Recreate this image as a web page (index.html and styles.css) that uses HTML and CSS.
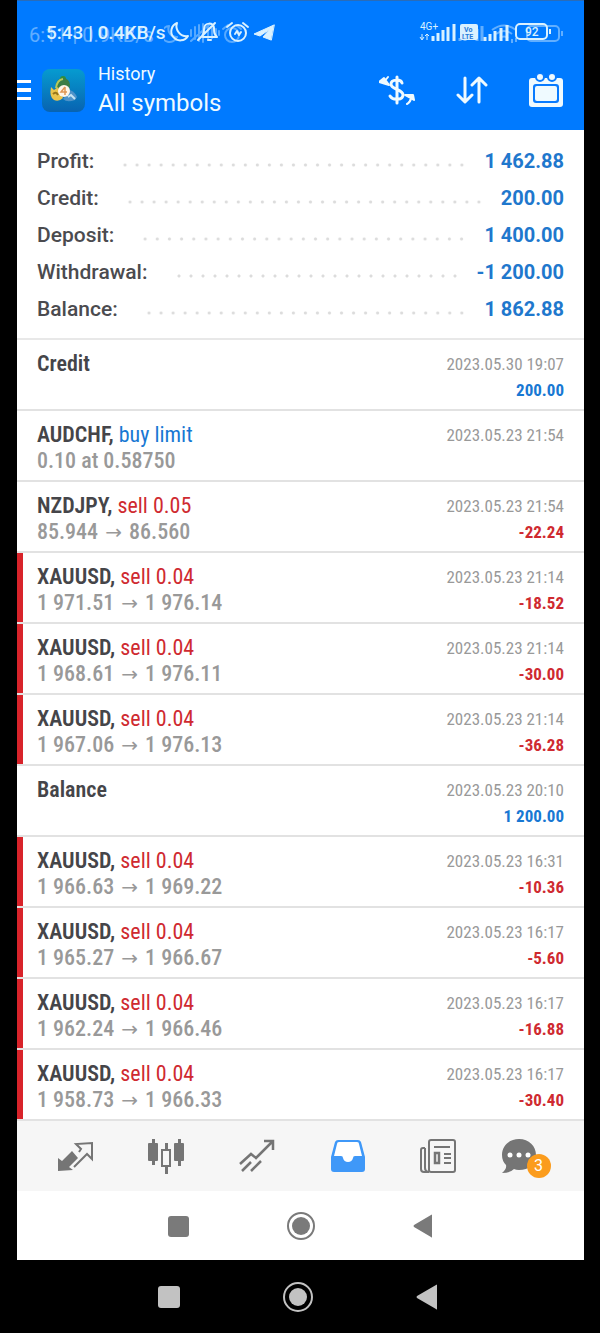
FILE: index.html
```html
<!DOCTYPE html>
<html lang="en">
<head>
<meta charset="utf-8">
<meta name="viewport" content="width=device-width, initial-scale=1">
<title>History</title>
<link rel="stylesheet" href="styles.css">
</head>
<body>
<div class="app">
  <header class="header">
    <div class="status">
      <div class="status-ghost">6:11 | 0.9KB/s</div>
      <div class="status-text">5:43 | 0.4KB/s</div>
      <svg class="status-icons" width="112" height="28" viewBox="164 19 112 28" fill="none" stroke="#d9f1ff" stroke-width="2" stroke-linecap="round" stroke-linejoin="round" aria-hidden="true">
        <g opacity=".4">
          <path d="M169 26a8 8 0 1 0 8 11a8 8 0 0 1-8-11z"/>
          <path d="M191 30v6M195 27v12M199 25v16M203 24v18M208 26v14M212 28v10M216 29v8M219 31v4M191 41L210 24"/>
          <circle cx="232" cy="35" r="7"/><path d="M223 29l5-4M236 25l5 4"/>
        </g>
        <path d="M177 23a9 9 0 1 0 11 13a10 10 0 0 1-11-13z"/>
        <path d="M202 36c2-2 2-4 2-7c0-7 10-7 10-1c0 4 0 6 3 9h-14M208 40h3M198 40L215 23"/>
        <circle cx="238" cy="33" r="8"/><path d="M227 27l5-4M243 23l5 4M235 34l2-3l2 4l2-3"/>
        <path d="M274 25L254 34L260 36L270 29L263 37L271 40Z" fill="#d9f1ff" stroke-width="1"/>
      </svg>
      <svg class="status-signal" width="146" height="26" viewBox="418 20 146 26" fill="none" stroke="#d9f1ff" aria-hidden="true">
        <text class="signal-label" x="420" y="30">4G+</text>
        <path d="M422 34v5M420 37l2 3l2-3M427 40v-5M425 36l2-2l2 2" stroke-width="1"/>
        <path d="M433 41v-5M438 41v-8M443 41v-11M448 41v-14M454 41v-17" stroke-width="3"/>
        <rect x="460" y="24" width="18" height="16" rx="2" fill="#d9f1ff" stroke="none"/>
        <text class="volte" x="464" y="32">Vo</text><text class="volte" x="462" y="39">LTE</text>
        <g opacity=".45"><path d="M460 41v-3M465 41v-5M477 41v-12M482 41v-15" stroke-width="3"/>
        <path d="M492 30q12-9 24 0M496 34q8-6 16 0M500 38q4-3 8 0M512 43v-4M516 38v4" stroke-width="2"/>
        <rect x="527" y="26" width="32" height="15" rx="4" stroke-width="2"/><path d="M562 31v5" stroke-width="2"/></g>
        <path d="M485 41v-4M490 41v-7M495 41v-10M501 41v-13M507 41v-16" stroke-width="3"/>
        <rect x="516" y="24" width="31" height="15" rx="4" stroke-width="2"/><path d="M550 29v5" stroke-width="2"/>
        <text class="battery" x="525" y="36">92</text>
      </svg>
    </div>
    <div class="toolbar">
      <button class="icon-button" aria-label="Menu"><svg width="14" height="22" viewBox="0 0 14 22" fill="#fff"><path d="M0 1h14v3H0zM0 9h14v4H0zM0 18h14v3H0z"/></svg></button>
      <svg class="logo" width="43" height="43" viewBox="0 0 43 43" aria-hidden="true">
        <defs><linearGradient id="tile" x2="0" y2="1"><stop offset="0" stop-color="#069bd0"/><stop offset="1" stop-color="#0863b1"/></linearGradient></defs>
        <rect width="43" height="43" rx="8" fill="url(#tile)"/>
        <circle cx="21" cy="10" r="3" fill="#2f8e3d"/><circle cx="21" cy="16" r="7" fill="#3c7d45"/><path d="M14 19q1-8 7-9" stroke="#b5c95c" stroke-width="2" fill="none"/>
        <path d="M9 18l3 3l4-3l5 11q-4 4-9 2q-5-3-3-13z" fill="#e9c44d"/><path d="M11 25q3-3 5 1" stroke="#97761c" stroke-width="2" fill="none"/>
        <path d="M21 30l7-9q5 2 7 7l-2 3q-8 3-12-1z" fill="#4f93c9"/><path d="M26 28l3-2l4 4" stroke="#c4e4f4" stroke-width="2" fill="none"/>
        <circle cx="22" cy="22" r="6" fill="#fff5e7"/><path d="M23 18l-4 5h6M23 18v8" stroke="#df9654" stroke-width="1.500" fill="none"/>
      </svg>
      <div class="titles"><div class="subtitle">History</div><h1 class="title">All symbols</h1></div>
      <div class="actions">
        <button class="icon-button" aria-label="Currency"><svg width="36" height="32" viewBox="0 0 36 32" fill="none" stroke="#effaff" stroke-width="3" stroke-linecap="round"><path d="M18 3v26M23 9c-1-4-11-4-11 1c0 6 12 5 12 11c0 5-10 6-13 1"/><path d="M9 3L5 8M0 8l5-4l5 7z" fill="#effaff" stroke-width="2" stroke-linejoin="round"/><path d="M28 30q4-2 4-7M26 21l8 0l1 5z" fill="#effaff" stroke-width="2" stroke-linejoin="round"/></svg></button>
        <button class="icon-button" aria-label="Sort"><svg width="32" height="30" viewBox="0 0 32 30" fill="none" stroke="#effaff" stroke-width="3" stroke-linecap="round" stroke-linejoin="round"><path d="M9 3v23M2 20l7 7l7-7M23 27V4M16 10l7-7l7 7"/></svg></button>
        <button class="icon-button" aria-label="Choose period"><svg width="34" height="34" viewBox="0 0 34 34"><rect y="5" width="34" height="29" rx="3" fill="#effaff"/><rect x="4" y="11" width="26" height="19" rx="3" fill="#087bff"/><rect x="6" y="13" width="22" height="15" rx="2" fill="#effaff"/><g fill="#effaff" stroke="#087bff" stroke-width="2"><circle cx="11" cy="4" r="4"/><circle cx="23" cy="4" r="4"/></g></svg></button>
      </div>
    </div>
  </header>

  <main>
    <dl class="summary">
      <div class="sum-row"><dt>Profit:</dt><dd><span class="dots"></span>1 462.88</dd></div>
      <div class="sum-row"><dt>Credit:</dt><dd><span class="dots"></span>200.00</dd></div>
      <div class="sum-row"><dt>Deposit:</dt><dd><span class="dots"></span>1 400.00</dd></div>
      <div class="sum-row"><dt>Withdrawal:</dt><dd><span class="dots"></span>-1 200.00</dd></div>
      <div class="sum-row"><dt>Balance:</dt><dd><span class="dots"></span>1 862.88</dd></div>
    </dl>
    <ul class="deals">
      <li class="deal"><div class="info"><div><b>Credit</b></div></div><div class="meta"><time>2023.05.30 19:07</time><div class="amount blue">200.00</div></div></li>
      <li class="deal"><div class="info"><div><b>AUDCHF,</b> <span class="blue">buy limit</span></div><div class="price">0.10 at 0.58750</div></div><div class="meta"><time>2023.05.23 21:54</time></div></li>
      <li class="deal"><div class="info"><div><b>NZDJPY,</b> <span class="red">sell 0.05</span></div><div class="price">85.944 <span class="arrow">→</span> 86.560</div></div><div class="meta"><time>2023.05.23 21:54</time><div class="amount red">-22.24</div></div></li>
      <li class="deal marked"><div class="info"><div><b>XAUUSD,</b> <span class="red">sell 0.04</span></div><div class="price">1 971.51 <span class="arrow">→</span> 1 976.14</div></div><div class="meta"><time>2023.05.23 21:14</time><div class="amount red">-18.52</div></div></li>
      <li class="deal marked"><div class="info"><div><b>XAUUSD,</b> <span class="red">sell 0.04</span></div><div class="price">1 968.61 <span class="arrow">→</span> 1 976.11</div></div><div class="meta"><time>2023.05.23 21:14</time><div class="amount red">-30.00</div></div></li>
      <li class="deal marked"><div class="info"><div><b>XAUUSD,</b> <span class="red">sell 0.04</span></div><div class="price">1 967.06 <span class="arrow">→</span> 1 976.13</div></div><div class="meta"><time>2023.05.23 21:14</time><div class="amount red">-36.28</div></div></li>
      <li class="deal"><div class="info"><div><b>Balance</b></div></div><div class="meta"><time>2023.05.23 20:10</time><div class="amount blue">1 200.00</div></div></li>
      <li class="deal marked"><div class="info"><div><b>XAUUSD,</b> <span class="red">sell 0.04</span></div><div class="price">1 966.63 <span class="arrow">→</span> 1 969.22</div></div><div class="meta"><time>2023.05.23 16:31</time><div class="amount red">-10.36</div></div></li>
      <li class="deal marked"><div class="info"><div><b>XAUUSD,</b> <span class="red">sell 0.04</span></div><div class="price">1 965.27 <span class="arrow">→</span> 1 966.67</div></div><div class="meta"><time>2023.05.23 16:17</time><div class="amount red">-5.60</div></div></li>
      <li class="deal marked"><div class="info"><div><b>XAUUSD,</b> <span class="red">sell 0.04</span></div><div class="price">1 962.24 <span class="arrow">→</span> 1 966.46</div></div><div class="meta"><time>2023.05.23 16:17</time><div class="amount red">-16.88</div></div></li>
      <li class="deal marked"><div class="info"><div><b>XAUUSD,</b> <span class="red">sell 0.04</span></div><div class="price">1 958.73 <span class="arrow">→</span> 1 966.33</div></div><div class="meta"><time>2023.05.23 16:17</time><div class="amount red">-30.40</div></div></li>
    </ul>
  </main>

  <nav class="tabs">
    <button class="tab" aria-label="Quotes"><svg width="36" height="36" viewBox="0 0 36 36"><path d="M1 33V20l4 3l10-10l6 7l-9 9l4 3z" fill="#757575"/><path d="M22 14l2-3l-5-5l16-1v16l-5-5l-13 13" fill="none" stroke="#757575" stroke-width="2"/></svg></button>
    <button class="tab" aria-label="Charts"><svg width="38" height="38" viewBox="0 0 38 38" fill="#757575"><rect x="1" y="6" width="10" height="18" rx="1"/><path d="M5 2h3v26H5zM31 2h3v27h-3z"/><rect x="27" y="6" width="10" height="18" rx="1"/><path d="M18 6h3v7h-3zM18 29h3v8h-3z"/><rect x="15" y="13" width="8" height="16" fill="none" stroke="#757575" stroke-width="2"/></svg></button>
    <button class="tab" aria-label="Trade"><svg width="36" height="36" viewBox="0 0 36 36" fill="none" stroke="#757575" stroke-width="2"><path d="M1 26l11-10l5 4L33 4M25 3h9v9M3 33l9-9M12 33l10-10" stroke-width="2.500"/></svg></button>
    <button class="tab" aria-label="History" aria-current="page"><svg width="36" height="34" viewBox="0 0 36 34"><path d="M8 1h20q2 0 3 2l4 15v12q0 3-3 3H4q-3 0-3-3V18L5 3q1-2 3-2z" fill="#3f98f8"/><path d="M9 3h18q2 0 2 2l3 12h-7q-2 0-2 2q-1 4-5 4t-5-4q0-2-2-2H4L7 5q0-2 2-2z" fill="#fff"/></svg></button>
    <button class="tab" aria-label="News"><svg width="37" height="36" viewBox="0 0 37 36" fill="none" stroke="#757575" stroke-width="2"><rect x="9" y="2" width="26" height="32" rx="2"/><path d="M9 34H4q-3 0-3-3V12q0-2 2-2h2M5 10v20q0 3 3 4M14 9h16M24 16h7M24 20h7M24 25h7"/><rect x="15" y="15" width="4" height="10" stroke-width="2.500"/></svg></button>
    <button class="tab tab-chat" aria-label="Messages"><span class="chat"><svg width="36" height="36" viewBox="0 0 36 36" fill="#757575"><path d="M18 1c10 0 17 7 17 16s-7 15-17 15q-3 0-5-1q-4 4-12 4q5-4 4-8Q1 23 1 17C1 8 8 1 18 1z"/><g fill="#fff"><circle cx="9" cy="17" r="2.500"/><circle cx="18" cy="17" r="2.500"/><circle cx="27" cy="17" r="2.500"/></g></svg><span class="badge">3</span></span></button>
  </nav>
  <nav class="sysnav">
    <button class="sys" aria-label="Recent apps"><svg width="30" height="30" fill="#7a7a7a"><rect x="4" y="5" width="21" height="21" rx="3"/></svg></button>
    <button class="sys" aria-label="Home"><svg width="30" height="30" fill="#7a7a7a"><circle cx="15" cy="15" r="9"/><circle cx="15" cy="15" r="13" fill="none" stroke="#7a7a7a" stroke-width="2"/></svg></button>
    <button class="sys" aria-label="Back"><svg width="30" height="30" fill="#7a7a7a"><path d="M24 4v22q0 1-1 0L6 16q-1-1 0-2L23 4q1-1 1 0z"/></svg></button>
  </nav>
</div>
<nav class="sysnav sysnav-outer">
  <button class="sys" aria-label="Recent apps"><svg width="32" height="32" fill="#c2c2c2"><rect x="5" y="5" width="22" height="22" rx="3"/></svg></button>
  <button class="sys" aria-label="Home"><svg width="32" height="32" fill="#c2c2c2"><circle cx="16" cy="16" r="9"/><circle cx="16" cy="16" r="14" fill="none" stroke="#c2c2c2" stroke-width="2"/></svg></button>
  <button class="sys" aria-label="Back"><svg width="32" height="32" fill="#c2c2c2"><path d="M26 4v24q0 1-1 0L6 17q-1-1 0-2L25 4q1-1 1 0z"/></svg></button>
</nav>
</body>
</html>
```
FILE: styles.css
```css
* { box-sizing: border-box; }

body {
  margin: 0;
  background: #000;
  font-family: Roboto, "Liberation Sans", sans-serif;
}

button {
  margin: 0;
  padding: 0;
  border: 0;
  background: none;
  font: inherit;
  cursor: pointer;
}

svg { display: block; }

.app {
  margin: 0 16px 0 17px;
  background: #fff;
}

.header {
  background: #007aff;
  border-top: 1px solid #2a6cb8;
  color: #effaff;
}

.status {
  position: relative;
  display: flex;
  align-items: center;
  height: 49px;
  padding: 15px 20px 0 29px;
}

.status-text {
  width: 118px;
  font-size: 19px;
  font-weight: 500;
  line-height: 24px;
  white-space: nowrap;
  color: #d9f1ff;
}

.status-ghost {
  position: absolute;
  left: 12px;
  top: 22px;
  font-size: 20px;
  line-height: 24px;
  white-space: nowrap;
  opacity: 0.4;
}

.status-signal { margin-left: auto; }
.signal-label { font-size: 10px; fill: #d9f1ff; stroke: none; }
.volte { font-size: 7px; font-weight: 700; fill: #2579d8; stroke: none; }
.battery { font-size: 12px; font-weight: 500; fill: #d9f1ff; stroke: none; }

.toolbar {
  display: flex;
  align-items: center;
  height: 80px;
  padding-right: 21px;
}

.logo { margin: 0 13px 0 11px; }
.subtitle { font-size: 18px; line-height: 26px; }
.title { margin: 0; font-size: 24px; font-weight: 400; line-height: 32px; }
.actions { display: flex; align-items: center; gap: 41px; margin-left: auto; }

.summary {
  margin: 0;
  padding: 13px 20px 10px;
  border-bottom: 2px solid #e8e8e8;
  font-size: 20px;
  font-weight: 700;
  line-height: 37px;
}

.sum-row { display: flex; }
.sum-row dt { color: #4b4b4f; font-size: 21px; font-weight: 500; }
.sum-row dd { display: flex; flex: 1; margin: 0; color: #1f78cd; }

.dots {
  flex: 1;
  height: 4px;
  margin: 20px 16px 0 25px;
  background: radial-gradient(circle, #dcdcdc 1px, transparent 2px) 0 0 / 12px 4px round;
}

.deals {
  margin: 0;
  padding: 0;
  list-style: none;
  font-family: "Roboto Condensed", Roboto, sans-serif;
  font-size: 22px;
  line-height: 26px;
}

.deal {
  display: flex;
  justify-content: space-between;
  min-height: 71px;
  padding: 11px 20px 6px;
  border-bottom: 2px solid #e2e2e2;
}

.marked {
  background: linear-gradient(#d8232a, #d8232a) left / 6px 100% no-repeat;
}

.deal b { font-weight: 600; color: #454549; }
.price { font-weight: 500; color: #999; }
.arrow { margin: 0 2px; font-family: "DejaVu Sans", sans-serif; font-size: 20px; line-height: 1; }
.meta { text-align: right; font-size: 17px; color: #999; }
.meta time { display: block; }
.amount { font-weight: 700; }
.blue { color: #1878d3; }
.red { color: #cf2a30; }

.tabs {
  display: grid;
  grid-template-columns: repeat(6, 1fr);
  height: 70px;
  padding: 0 9px 0 12px;
  background: #f6f6f6;
}

.tab { display: flex; align-items: center; justify-content: center; }
.tab-chat { padding-right: 22px; }
.chat { position: relative; }

.badge {
  position: absolute;
  right: -14px;
  bottom: -4px;
  width: 24px;
  height: 24px;
  border-radius: 50%;
  background: #fb9c1d;
  color: #fff;
  font-size: 16px;
  line-height: 24px;
  text-align: center;
}

.sysnav {
  display: flex;
  align-items: center;
  justify-content: center;
  gap: 92px;
  height: 69px;
}

.sysnav-outer { gap: 97px; height: 73px; padding-right: 4px; }
```
